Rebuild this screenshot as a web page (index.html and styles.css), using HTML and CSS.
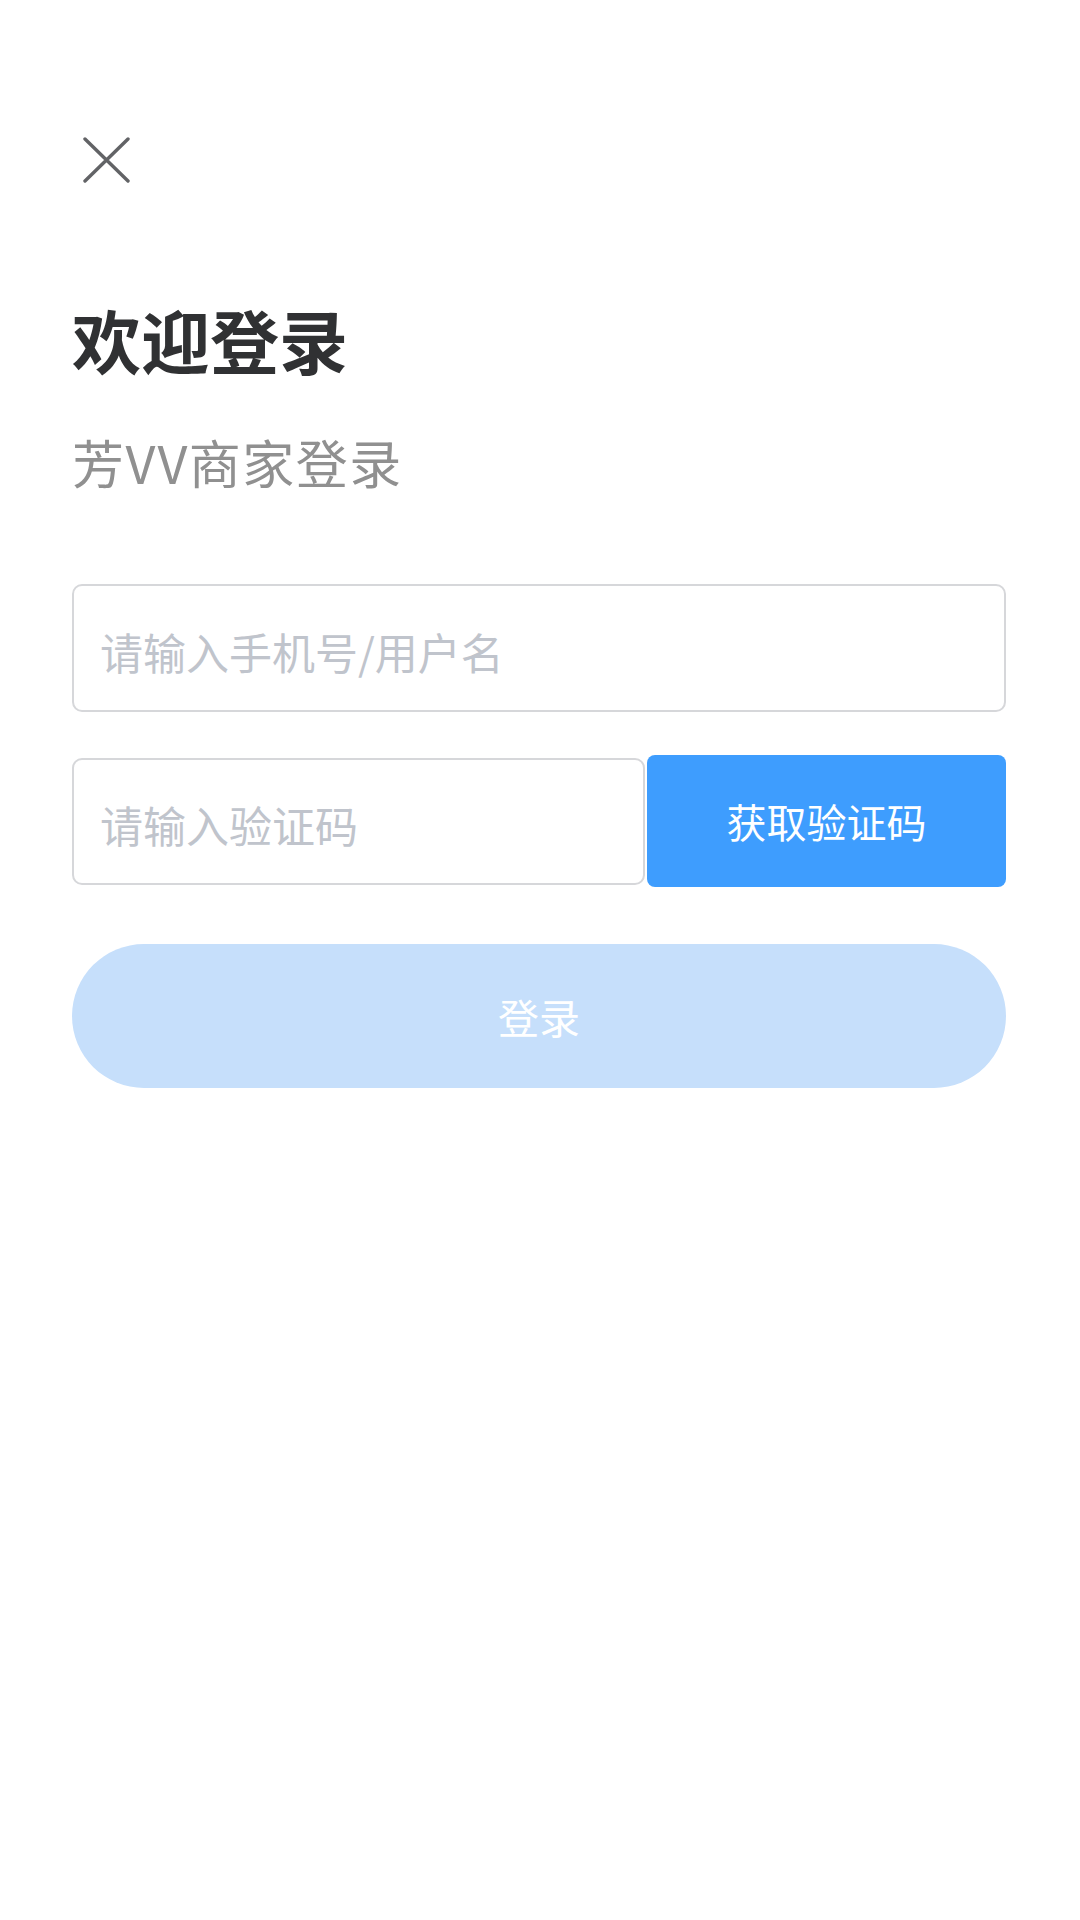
FILE: index.html
```html
<!DOCTYPE html>
<html lang="zh-CN">
<head>
<meta charset="utf-8">
<title>欢迎登录</title>
<link rel="stylesheet" href="styles.css">
</head>
<body>
<div class="page">
  <div class="close-btn">
    <svg width="47" height="46" viewBox="0 0 47 46"><path d="M2 2 L45 44 M45 2 L2 44" stroke="#626366" stroke-width="3.4" stroke-linecap="round" fill="none"/></svg>
  </div>
  <h1 class="title">欢迎登录</h1>
  <p class="subtitle">芳VV商家登录</p>
  <form class="form">
    <input class="field" type="text" placeholder="请输入手机号/用户名">
    <div class="code-row">
      <input class="field code-field" type="text" placeholder="请输入验证码">
      <button type="button" class="code-btn">获取验证码</button>
    </div>
    <button type="button" class="login-btn">登录</button>
  </form>
</div>
</body>
</html>
```
FILE: styles.css
```css
html, body {
  margin: 0;
  padding: 0;
  background: #ffffff;
}
body {
  font-family: "Noto Sans CJK SC", "Noto Sans", sans-serif;
}
.page {
  padding: 137px 74px 0 72px;
  display: flex;
  flex-direction: column;
}
.close-btn {
  margin-left: 11px;
  width: 47px;
  height: 46px;
  line-height: 0;
}
.title {
  margin: 122px 0 0 0;
  font-size: 69px;
  line-height: 69px;
  font-weight: 700;
  color: #303133;
}
.subtitle {
  margin: 62px 0 0 0;
  font-size: 52px;
  line-height: 52px;
  letter-spacing: 1.5px;
  color: #909090;
}
.form {
  margin-top: 96px;
  display: flex;
  flex-direction: column;
}
.field {
  box-sizing: border-box;
  height: 128px;
  width: 100%;
  border: 2.5px solid #d6d7da;
  border-radius: 10px;
  padding: 6px 26px 0 26px;
  font-family: "Noto Sans CJK SC", "Noto Sans", sans-serif;
  font-size: 43px;
  color: #303133;
  background: #ffffff;
  outline: none;
}
.field::placeholder {
  color: #c0c4cc;
}
.code-row {
  margin-top: 43px;
  display: flex;
  align-items: center;
  gap: 2px;
}
.code-field {
  flex: 1;
  width: auto;
  min-width: 0;
  height: 127px;
}
.code-btn {
  width: 359px;
  height: 132px;
  border: none;
  border-radius: 8px;
  background: #3e9dfe;
  color: #ffffff;
  font-family: "Noto Sans CJK SC", "Noto Sans", sans-serif;
  font-size: 40px;
  padding: 0;
}
.login-btn {
  margin-top: 57px;
  height: 144px;
  width: 100%;
  border: none;
  border-radius: 72px;
  background: #c6dffb;
  color: #ffffff;
  font-family: "Noto Sans CJK SC", "Noto Sans", sans-serif;
  font-size: 41px;
  padding: 0;
}
```
